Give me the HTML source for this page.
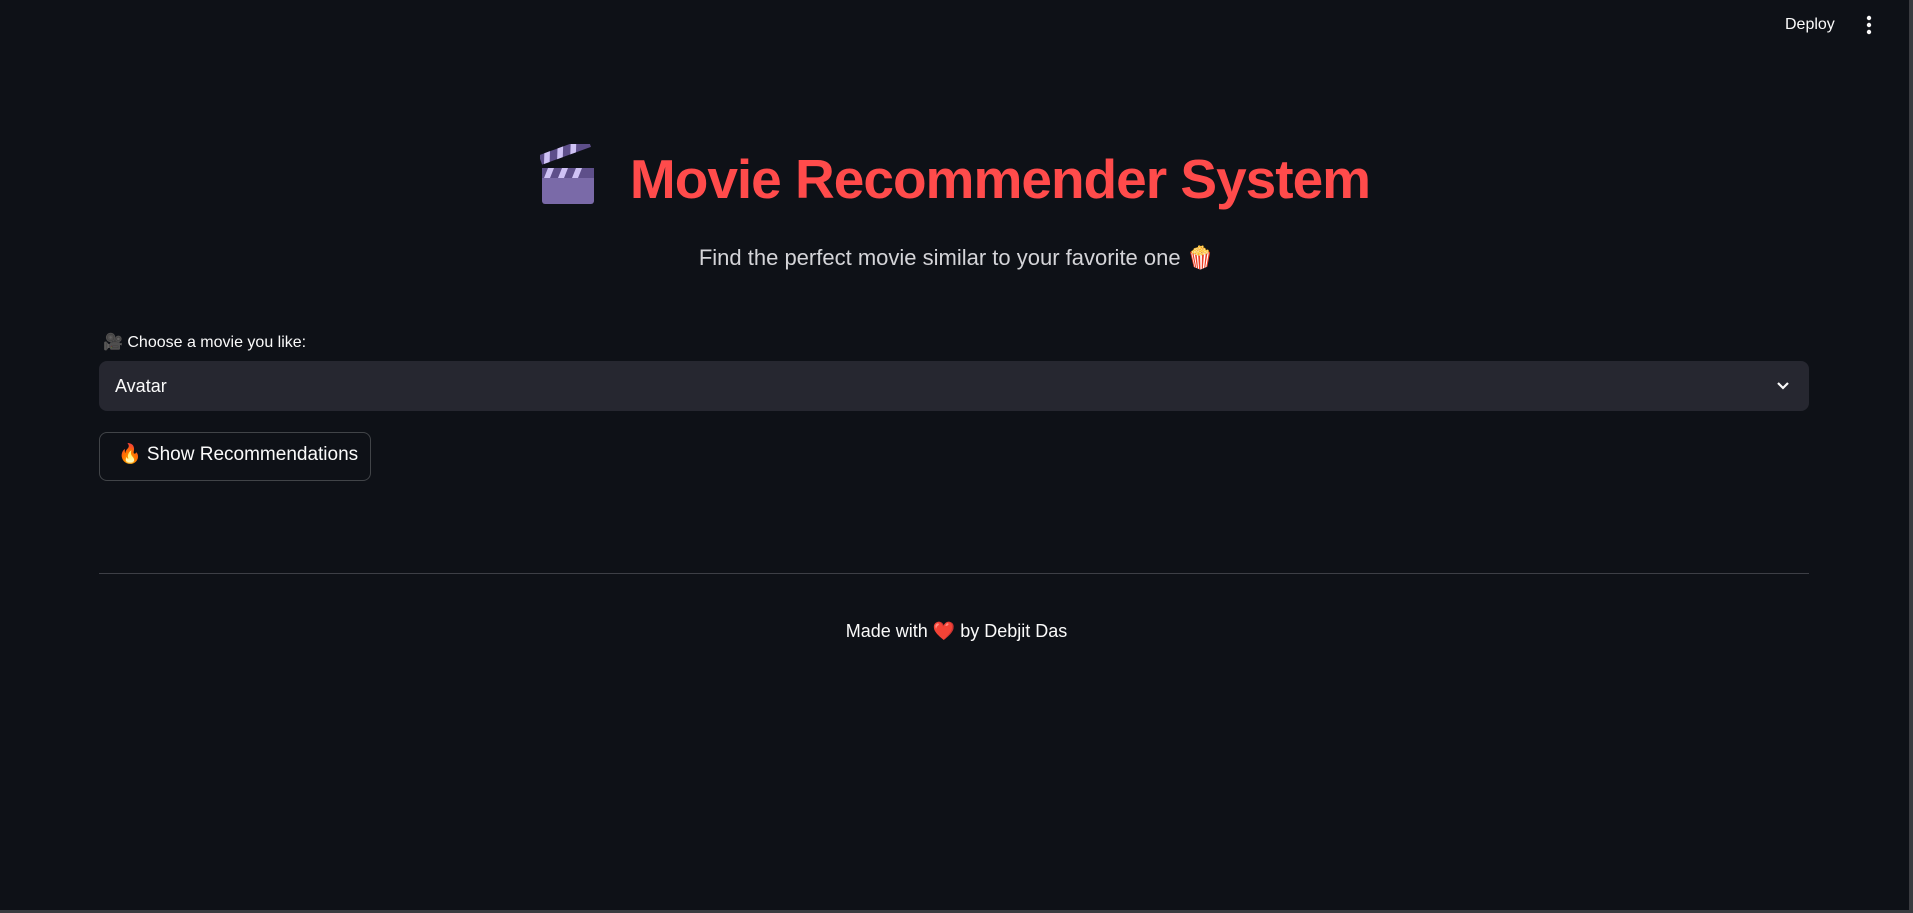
<!DOCTYPE html>
<html><head><meta charset="utf-8"><style>
html,body{margin:0;padding:0;width:1913px;height:913px;overflow:hidden;background:#0e1117;font-family:"Liberation Sans","Noto Sans CJK JP",sans-serif;color:#fafafa}
.frame{position:absolute;right:0;top:0;width:4px;height:913px;background:#3a3b40}
.frameb{position:absolute;left:0;bottom:0;width:1913px;height:3px;background:#3a3b40}
.abs{position:absolute}
</style></head><body>
<div class="frame"></div><div class="frameb"></div>
<div class="abs" style="left:1785px;top:16px;font-size:16px;">Deploy</div>
<svg class="abs" style="left:1864px;top:15px" width="10" height="22"><circle cx="5" cy="3" r="2.2" fill="#fafafa"/><circle cx="5" cy="10" r="2.2" fill="#fafafa"/><circle cx="5" cy="17" r="2.2" fill="#fafafa"/></svg>

<svg class="abs" style="left:540px;top:144px" width="56" height="62" viewBox="0 0 56 62">
<rect x="2" y="26" width="52" height="34" rx="3" fill="#7a6aa8"/>
<rect x="2" y="24" width="52" height="10" fill="#5e4f8a"/>
<path d="M8 24l6 0-4 10-6 0zM22 24l6 0-4 10-6 0zM36 24l6 0-4 10-6 0z" fill="#cfc2f5"/>
<g transform="rotate(-20 4 20)"><rect x="2" y="10" width="52" height="10" fill="#5e4f8a"/><path d="M8 10h6l-4 10h-6zM22 10h6l-4 10h-6zM36 10h6l-4 10h-6z" fill="#cfc2f5"/></g>
</svg>
<div class="abs" style="left:600px;top:139px;width:800px;text-align:center;font-size:55px;font-weight:bold;color:#ff4b4b;letter-spacing:-1px;line-height:80px">Movie Recommender System</div>

<div class="abs" style="left:0;width:1913px;top:243px;text-align:center;font-size:22px;color:#d4d4d8;line-height:30px">Find the perfect movie similar to your favorite one <span style="color:#ff4f8b">🍿</span></div>

<div class="abs" style="left:103px;top:333px;font-size:16px;line-height:20px">🎥 Choose a movie you like:</div>
<div class="abs" style="left:99px;top:361px;width:1710px;height:50px;background:#262730;border-radius:8px"></div>
<div class="abs" style="left:115px;top:376px;font-size:18px;line-height:20px">Avatar</div>
<svg class="abs" style="left:1775px;top:379px" width="16" height="14"><path d="M3 4l5 5 5-5" stroke="#fafafa" stroke-width="2.2" fill="none"/></svg>

<div class="abs" style="left:99px;top:432px;width:270px;height:47px;border:1px solid rgba(250,250,250,0.22);border-radius:8px;background:#0e1117"></div>
<div class="abs" style="left:118px;top:444px;font-size:19px;line-height:22px">🔥 Show Recommendations</div>

<div class="abs" style="left:99px;top:573px;width:1710px;height:1px;background:#3d3f46"></div>
<div class="abs" style="left:0;width:1913px;top:620px;text-align:center;font-size:18px;line-height:22px">Made with <span style="color:#ff3b6b">❤️</span> by Debjit Das</div>
</body></html>
